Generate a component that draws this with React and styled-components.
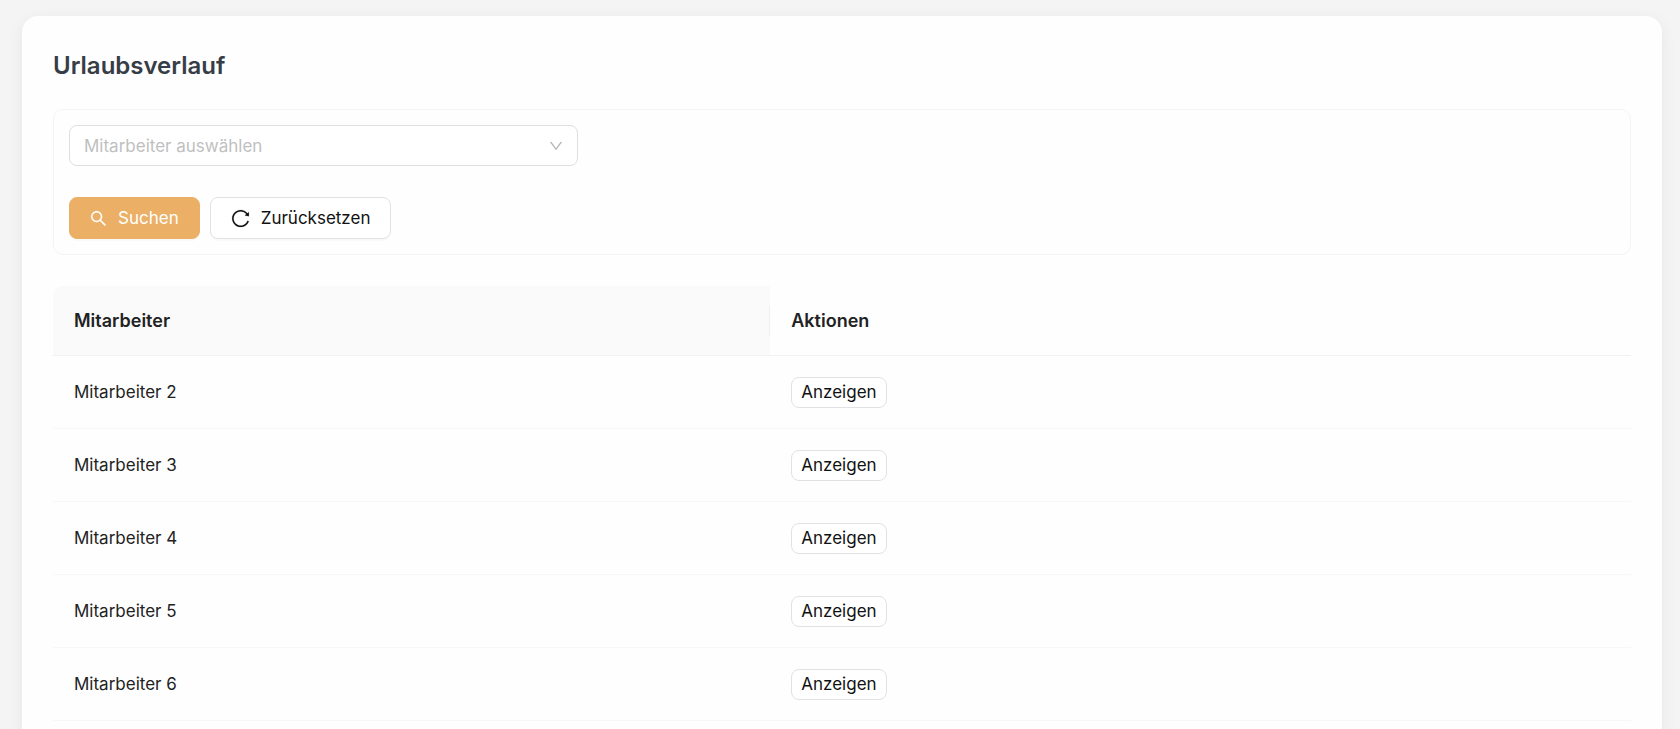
import React, { useState } from 'react';
import styled, { createGlobalStyle } from 'styled-components';
import { AiOutlineDown, AiOutlineReload, AiOutlineSearch } from 'react-icons/ai';

const employees = ['Mitarbeiter 2', 'Mitarbeiter 3', 'Mitarbeiter 4', 'Mitarbeiter 5', 'Mitarbeiter 6'];

const App = () => {
    const [selected, setSelected] = useState('')
    const [filter, setFilter] = useState('')
    const rows = employees.filter(name => !filter || name === filter)

    const handleSubmit = (event) => {
        event.preventDefault()
        setFilter(selected)
    }

    const handleReset = () => {
        setSelected('')
        setFilter('')
    }

    return (
        <Page>
            <GlobalStyle />
            <Card>
                <Title>Urlaubsverlauf</Title>
                <Filter onSubmit={handleSubmit}>
                    <Fields>
                        <SelectBox>
                            <Select
                                aria-label="Mitarbeiter auswählen"
                                value={selected}
                                $empty={!selected}
                                onChange={(event) => setSelected(event.target.value)}
                            >
                                <option value="">Mitarbeiter auswählen</option>
                                {employees.map(name => <option key={name} value={name}>{name}</option>)}
                            </Select>
                            <AiOutlineDown size={16} />
                        </SelectBox>
                    </Fields>
                    <Buttons>
                        <Button type="submit" $primary>
                            <AiOutlineSearch size={19} />
                            Suchen
                        </Button>
                        <Button type="button" onClick={handleReset}>
                            <AiOutlineReload size={21} />
                            Zurücksetzen
                        </Button>
                    </Buttons>
                </Filter>
                <Table>
                    <thead>
                        <tr>
                            <NameHead scope="col"><HeadLabel $divider>Mitarbeiter</HeadLabel></NameHead>
                            <Head scope="col"><HeadLabel>Aktionen</HeadLabel></Head>
                        </tr>
                    </thead>
                    <tbody>
                        {rows.map(name => (
                            <tr key={name}>
                                <Cell>{name}</Cell>
                                <Cell><SmallButton type="button">Anzeigen</SmallButton></Cell>
                            </tr>
                        ))}
                    </tbody>
                </Table>
            </Card>
        </Page>
    );
}

const GlobalStyle = createGlobalStyle`
    * {
        box-sizing: border-box;
    }

    body {
        margin: 0;
        background: #f4f4f4;
        color: #222222;
        font-family: Inter, "Liberation Sans", sans-serif;
        font-size: 17px;
        line-height: 24px;
    }

    button, select {
        font: inherit;
    }
`

const Page = styled.main`
    height: 100vh;
    overflow: hidden;
    padding: 16px 18px 0 22px;
`

const Card = styled.section`
    padding: 31px;
    border-radius: 16px;
    background: #fefefe;
    box-shadow: 0 4px 16px rgba(0, 0, 0, 0.06);
`

const Title = styled.h1`
    margin: 0 0 24px;
    color: #363d46;
    font-size: 24px;
    font-weight: 600;
    line-height: 38px;
`

const Filter = styled.form`
    margin-bottom: 31px;
    padding: 15px;
    border: 1px solid #f4f4f4;
    border-radius: 10px;
`

const Fields = styled.div`
    display: grid;
    grid-template-columns: repeat(3, 1fr);
    gap: 10px;
    margin-bottom: 31px;
`

const SelectBox = styled.div`
    display: grid;
    align-items: center;

    > * {
        grid-area: 1 / 1;
    }

    svg {
        justify-self: end;
        margin-right: 14px;
        color: #b4b4b4;
        pointer-events: none;
    }
`

const Select = styled.select`
    width: 100%;
    height: 41px;
    padding: 0 40px 0 14px;
    appearance: none;
    border: 1px solid #dfdfdf;
    border-radius: 8px;
    background: #ffffff;
    color: ${props => props.$empty ? '#bfbfbf' : '#222222'};

    &:focus {
        outline: none;
        border-color: #ebb066;
    }
`

const Buttons = styled.div`
    display: flex;
    gap: 10px;
`

const Button = styled.button`
    display: flex;
    align-items: center;
    gap: 10px;
    height: 42px;
    padding: 0 20px 0 19px;
    border: 1px solid ${props => props.$primary ? '#ebb066' : '#e2e2e2'};
    border-radius: 8px;
    background: ${props => props.$primary ? '#ebb066' : '#ffffff'};
    box-shadow: 0 2px 0 rgba(0, 0, 0, 0.02);
    color: ${props => props.$primary ? '#ffffff' : '#111111'};
    cursor: pointer;

    svg {
        stroke-width: 6;
    }
`

const Table = styled.table`
    width: 100%;
    table-layout: fixed;
    border-collapse: separate;
    border-spacing: 0;
`

const Head = styled.th`
    padding: 20px 0 19px;
    border-bottom: 1px solid #f2f2f2;
    font-size: 18px;
    font-weight: 600;
    text-align: left;
`

const NameHead = styled(Head)`
    width: calc(100% * 5 / 11);
    border-top-left-radius: 10px;
    background: #fafafa;
`

const HeadLabel = styled.div`
    padding: 3px 21px;
    border-right: 1px solid ${props => props.$divider ? '#f0f0f0' : 'transparent'};
`

const Cell = styled.td`
    height: 73px;
    padding: 0 21px;
    border-bottom: 1px solid #f7f7f7;
`

const SmallButton = styled.button`
    display: block;
    height: 31px;
    padding: 0 9px;
    border: 1px solid #e2e2e2;
    border-radius: 8px;
    background: #ffffff;
    color: #111111;
    cursor: pointer;
`

export default App;
